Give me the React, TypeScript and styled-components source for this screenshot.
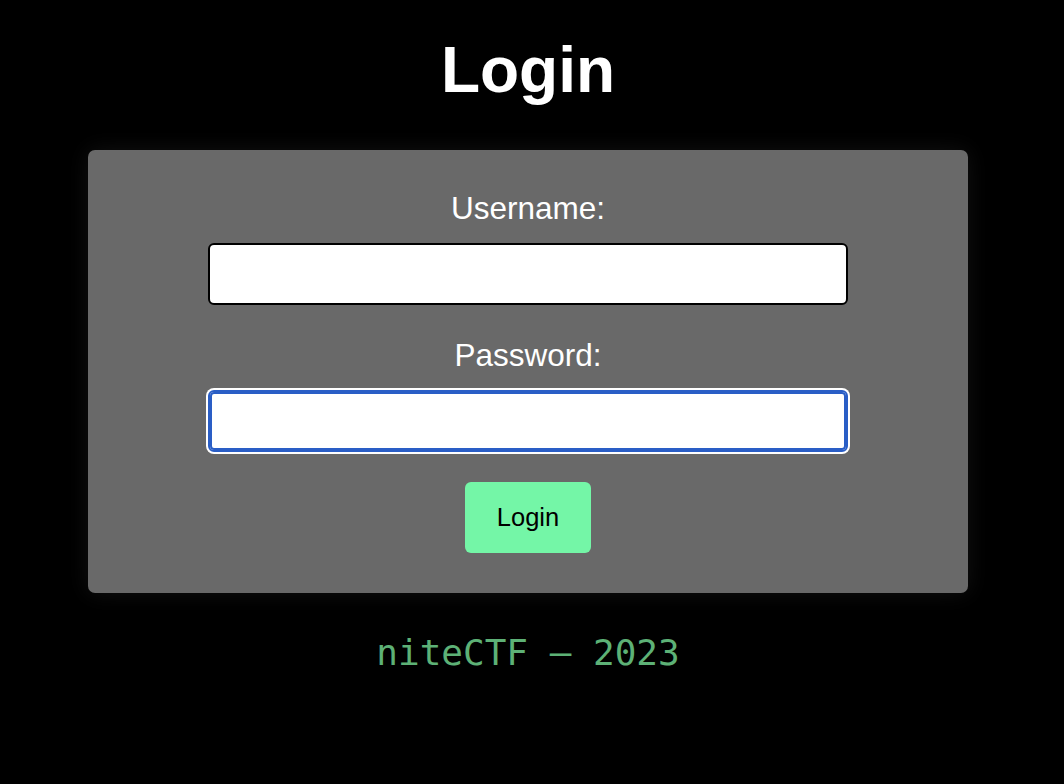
import React from "react";
import styled, { createGlobalStyle } from "styled-components";

const Global = createGlobalStyle`
  html, body { margin: 0; padding: 0; background: #000; }
  body { font-family: "Liberation Sans", Arial, sans-serif; }
`;

const Page = styled.div`
  display: flex;
  flex-direction: column;
  align-items: center;
  min-height: 784px;
  padding-right: 8px;
  background: #000;
`;

const Title = styled.h1`
  margin: 33px 0 0;
  font-size: 64px;
  line-height: 74px;
  font-weight: 700;
  color: #fff;
`;

const Card = styled.form`
  margin-top: 43px;
  width: 880px;
  box-sizing: border-box;
  padding: 40px 0 39px;
  background: #696969;
  border-radius: 7px;
  box-shadow: 0 0 22px rgba(255, 255, 255, 0.07);
  display: flex;
  flex-direction: column;
  align-items: center;
`;

const Label = styled.label`
  font-size: 31.5px;
  line-height: 36px;
  color: #fff;
  margin-bottom: 17px;
`;

const Input = styled.input<{ $focused?: boolean }>`
  width: 640px;
  height: 62px;
  box-sizing: border-box;
  background: #fff;
  border: 2px solid ${(p) => (p.$focused ? "#2a5ec6" : "#000")};
  border-radius: 6px;
  margin-bottom: 32px;
  outline: none;
  font-size: 20px;
  box-shadow: ${(p) =>
    p.$focused ? "inset 0 0 0 2px #2a5ec6, 0 0 0 2px #fff" : "none"};
`;

const Button = styled.button`
  width: 126px;
  height: 71px;
  border: none;
  border-radius: 6px;
  background: #74f6a7;
  color: #000;
  font-family: "Liberation Sans", Arial, sans-serif;
  font-size: 25.5px;
  cursor: pointer;
  margin-top: -2px;
  margin-bottom: 1px;
`;

const Footer = styled.p`
  margin: 39px 0 0;
  font-family: "DejaVu Sans Mono", monospace;
  font-size: 36px;
  line-height: 42px;
  color: #5db176;
`;

export default function App() {
  return (
    <Page>
      <Global />
      <Title>Login</Title>
      <Card onSubmit={(e) => e.preventDefault()}>
        <Label htmlFor="u">Username:</Label>
        <Input id="u" type="text" />
        <Label htmlFor="p">Password:</Label>
        <Input id="p" type="password" $focused />
        <Button type="submit">Login</Button>
      </Card>
      <Footer>niteCTF – 2023</Footer>
    </Page>
  );
}
